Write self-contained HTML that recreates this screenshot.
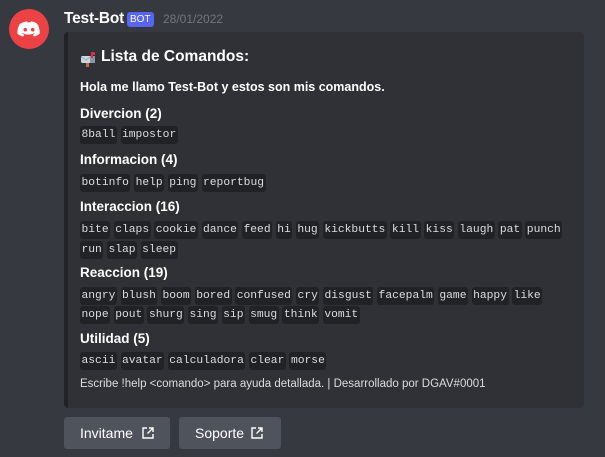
<!DOCTYPE html>
<html><head><style>
*{margin:0;padding:0;box-sizing:border-box}
body{width:605px;height:457px;background:#36393f;font-family:"Liberation Sans",sans-serif;color:#dcddde;position:relative;overflow:hidden}
.av{position:absolute;left:9px;top:9px;width:40px;height:40px;border-radius:50%;background:#ed4245}
.name{position:absolute;left:64px;top:10px;font-size:15.5px;font-weight:bold;color:#fff;letter-spacing:-0.2px}
.bot{position:absolute;left:127px;top:12px;background:#5865f2;color:#fff;font-size:10px;padding:2px 3px;border-radius:3px;line-height:11px}
.date{position:absolute;left:163px;top:12px;font-size:12px;color:#72767d}
.embed{position:absolute;left:64px;top:32px;width:520px;height:376px;background:#2f3136;border-left:4px solid #202225;border-radius:4px}
.t{position:absolute;left:80px;font-weight:bold;color:#fff;white-space:nowrap}
.row{position:absolute;left:80px;white-space:nowrap;height:18px}
code{font-family:"Liberation Mono",monospace;font-size:11.3px;background:#202225;color:#dcddde;padding:2px 1.5px 2px;border-radius:3px;margin-right:3.6px;display:inline-block;line-height:14px}
.btn{position:absolute;top:417px;height:32px;background:#4f545c;border-radius:3px;color:#fff;font-size:14px;line-height:32px;padding-left:16px}
.btn svg{position:absolute;top:10px}
</style></head><body>
<div class="av"><svg width="40" height="40" viewBox="0 0 40 40"><path d="M12 14.5c2.5-1.5 4.5-2 6-2.2l.6 1.2c1-.2 1.8-.2 2.8 0l.6-1.2c1.5.2 3.5.7 6 2.2 2 3.2 3 6.6 2.7 10.2-2 1.5-4 2.300-5.8 2.8l-1.2-1.8c.8-.3 1.5-.7 2.1-1.1l-.5-.4c-3.7 1.7-7.8 1.7-11.5 0l-.5.4c.6.4 1.3.8 2.1 1.1l-1.2 1.8c-1.8-.5-3.8-1.3-5.8-2.8-.3-3.6.7-7 2.7-10.2z" fill="#fff"/><circle cx="16.3" cy="20.7" r="1.8" fill="#ed4245"/><circle cx="23.7" cy="20.7" r="1.8" fill="#ed4245"/></svg></div>
<div class="name">Test-Bot</div>
<div class="bot">BOT</div>
<div class="date">28/01/2022</div>
<div class="embed"></div>
<svg style="position:absolute;left:80px;top:50px" width="17" height="17" viewBox="0 0 17 17"><rect x="1" y="6" width="14" height="7" rx="1.5" fill="#ccd6dd"/><path d="M1 7l5 3 4-3" stroke="#99aab5" fill="none"/><rect x="10" y="6" width="5" height="7" fill="#8899a6"/><rect x="6" y="13" width="3" height="4" fill="#c1694f"/><rect x="11" y="2" width="2" height="6" fill="#dd2e44"/><rect x="11" y="2" width="4" height="3" fill="#dd2e44"/></svg>
<div class="t" style="top:48px;left:101px;font-size:15.5px">Lista de Comandos:</div>
<div class="t" style="top:80px;font-size:12.5px">Hola me llamo Test-Bot y estos son mis comandos.</div>
<div class="t" style="top:106px;font-size:13.5px">Divercion (2)</div>
<div class="row" style="top:124px"><code>8ball</code><code>impostor</code></div>
<div class="t" style="top:152px;font-size:13.5px">Informacion (4)</div>
<div class="row" style="top:172px"><code>botinfo</code><code>help</code><code>ping</code><code>reportbug</code></div>
<div class="t" style="top:199px;font-size:13.5px">Interaccion (16)</div>
<div class="row" style="top:219px"><code>bite</code><code>claps</code><code>cookie</code><code>dance</code><code>feed</code><code>hi</code><code>hug</code><code>kickbutts</code><code>kill</code><code>kiss</code><code>laugh</code><code>pat</code><code>punch</code></div>
<div class="row" style="top:239px"><code>run</code><code>slap</code><code>sleep</code></div>
<div class="t" style="top:265px;font-size:13.5px">Reaccion (19)</div>
<div class="row" style="top:285px"><code>angry</code><code>blush</code><code>boom</code><code>bored</code><code>confused</code><code>cry</code><code>disgust</code><code>facepalm</code><code>game</code><code>happy</code><code>like</code></div>
<div class="row" style="top:304px"><code>nope</code><code>pout</code><code>shurg</code><code>sing</code><code>sip</code><code>smug</code><code>think</code><code>vomit</code></div>
<div class="t" style="top:331px;font-size:13.5px">Utilidad (5)</div>
<div class="row" style="top:350px"><code>ascii</code><code>avatar</code><code>calculadora</code><code>clear</code><code>morse</code></div>
<div style="position:absolute;left:80px;top:378px;font-size:11.5px;color:#dcddde;white-space:nowrap">Escribe !help &lt;comando&gt; para ayuda detallada. | Desarrollado por DGAV#0001</div>
<div class="btn" style="left:64px;width:106px">Invitame<svg style="left:78px" width="12" height="12" viewBox="0 0 12 12" fill="none" stroke="#fff" stroke-width="1.4"><path d="M5 1H1v10h10V7M7 1h4v4M11 1L5.5 6.5"/></svg></div>
<div class="btn" style="left:179px;width:102px">Soporte<svg style="left:72px" width="12" height="12" viewBox="0 0 12 12" fill="none" stroke="#fff" stroke-width="1.4"><path d="M5 1H1v10h10V7M7 1h4v4M11 1L5.5 6.5"/></svg></div>
</body></html>
